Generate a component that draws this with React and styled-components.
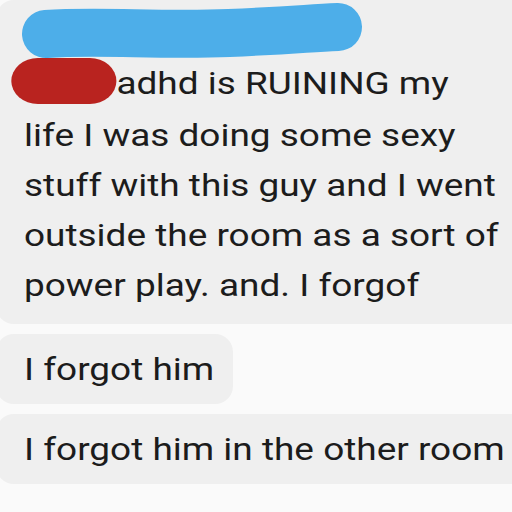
import React from "react";
import styled, { createGlobalStyle } from "styled-components";

const GlobalStyle = createGlobalStyle`
  html, body {
    margin: 0;
    padding: 0;
    background: #fafafa;
    overflow: hidden;
  }
  body {
    font-family: Roboto, "Noto Sans", sans-serif;
  }
`;

const Thread = styled.div`
  width: 512px;
  height: 512px;
  display: flex;
  flex-direction: column;
  gap: 10px;
  overflow: hidden;
`;

const Bubble = styled.div`
  background: #efefef;
  border-radius: 18px;
  padding: ${(p) => (p.$first ? "0 24px 14px" : "10px 23px 10px")};
  padding-left: 28px;
  padding-right: ${(p) => p.$padRight || "24px"};
  margin-left: -4px;
  width: ${(p) => (p.$wide ? "560px" : "fit-content")};
  box-sizing: border-box;
`;

/* the screenshot is stretched sideways, so the glyphs are widened */
const Line = styled.div`
  font-size: 32px;
  line-height: 50px;
  color: #1c1c1c;
  white-space: nowrap;
  transform: scaleX(1.155);
  transform-origin: 0 50%;
`;

const ScribbleRow = styled.div`
  height: 58px;
  margin-left: -15px;
  svg {
    display: block;
    overflow: visible;
  }
`;

const Redact = styled.svg`
  display: inline-block;
  vertical-align: middle;
  overflow: visible;
  margin-left: -10px;
  margin-right: 0;
`;

export default function App() {
  return (
    <>
      <GlobalStyle />
      <Thread>
        <Bubble $first $wide>
          <ScribbleRow>
            <svg width="360" height="58" viewBox="0 0 360 58">
              <path
                d="M37 34 C 90 30, 150 36, 220 33 S 300 28, 329 27"
                stroke="#4daee9"
                strokeWidth="48"
                strokeLinecap="round"
                fill="none"
              />
            </svg>
          </ScribbleRow>
          <Line>
            <Redact width="90" height="48" viewBox="0 0 90 48">
              <path
                d="M22 19 L 67 19"
                stroke="#b9231f"
                strokeWidth="46"
                strokeLinecap="round"
                fill="none"
              />
            </Redact>
            adhd is RUINING my
          </Line>
          <Line>life I was doing some sexy</Line>
          <Line>stuff with this guy and I went</Line>
          <Line>outside the room as a sort of</Line>
          <Line>power play. and. I forgof</Line>
        </Bubble>
        <Bubble $padRight="44px">
          <Line>I forgot him</Line>
        </Bubble>
        <Bubble $wide>
          <Line>I forgot him in the other room</Line>
        </Bubble>
      </Thread>
    </>
  );
}
